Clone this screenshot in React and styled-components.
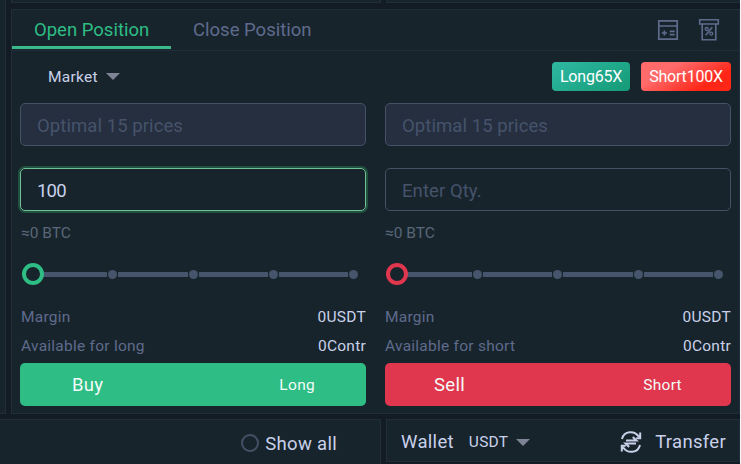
import React, { useState } from "react";
import styled, { createGlobalStyle, ThemeProvider } from "styled-components";

const theme = {
  page: "#131b24",
  panel: "#18242c",
  line: "#202d3a",
  text: "#c9d1ea",
  muted: "#5f6b8d",
  hint: "#46536b",
  field: "#445166",
  track: "#46556b",
  green: "#2ebd85",
  red: "#e0364e"
};

const GlobalStyle = createGlobalStyle`
  * {
    box-sizing: border-box;
  }
  body {
    margin: 0;
    background: #f4f5f7;
    overflow: hidden;
    font-family: Roboto, "Liberation Sans", sans-serif;
  }
`;

const Screen = styled.div`
  display: grid;
  grid-template-rows: 3px 406px 45px;
  row-gap: 5px;
  width: 740px;
  height: 464px;
  overflow: hidden;
  color: ${props => props.theme.text};
  background: ${props => props.theme.page};
`;

const Middle = styled.div`
  display: grid;
  grid-template-columns: 6px 729px;
  column-gap: 5px;
  margin-top: 1px;
`;

const Panel = styled.section`
  background: ${props => props.theme.panel};
  border: 1px solid ${props => props.theme.line};
`;

const Rail = styled(Panel)`
  margin-top: -9px;
  border-width: 0 1px 1px 0;
`;

const TopRow = styled.div`
  display: grid;
  grid-template-columns: 370px 1fr;
  column-gap: 5px;
  padding-left: 11px;
`;

const TopPanel = styled(Panel)`
  border-top: 0;
`;

const Header = styled.header`
  display: flex;
  justify-content: space-between;
  height: 41px;
  border-bottom: 1px solid ${props => props.theme.line};
`;

const Tabs = styled.nav`
  display: flex;
`;

const Tab = styled.button`
  display: flex;
  align-items: center;
  width: 159px;
  height: 39px;
  padding: 4px 0 0 22px;
  border: 0;
  border-bottom: 3px solid
    ${props => (props.$active ? "#3cb98a" : "transparent")};
  background: none;
  color: ${props => (props.$active ? props.theme.green : props.theme.muted)};
  font: 18.5px Roboto, sans-serif;
  white-space: nowrap;
`;

const Tools = styled.div`
  display: flex;
  gap: 19px;
  padding: 8px 19px 0 0;
  color: ${props => props.theme.muted};
`;

const Options = styled.div`
  display: flex;
  align-items: center;
  gap: 11px;
  height: 51px;
  margin-bottom: 1px;
  padding: 0 8px 0 36px;
`;

const Select = styled.div`
  display: flex;
  align-items: center;
  gap: 8px;
  margin-right: auto;
  font-size: 15.5px;
  letter-spacing: 0.25px;
`;

const Caret = styled.i`
  border: 7px solid transparent;
  border-top-color: #7e8496;
  border-bottom-width: 0;
`;

const Leverage = styled.span`
  display: flex;
  align-items: center;
  justify-content: center;
  width: ${props => (props.$short ? 90 : 78)}px;
  height: 29px;
  border-radius: 4px;
  color: #fff;
  font-size: 16px;
  letter-spacing: -0.2px;
  background: ${props =>
    props.$short
      ? "linear-gradient(150deg, #ff6a6a 30%, #ff2617 75%)"
      : "linear-gradient(150deg, #2fb9a3, #149a76)"};
`;

const Sides = styled.div`
  display: grid;
  grid-template-columns: 346px 346px;
  column-gap: 19px;
  padding-left: 8px;
`;

const Field = styled.input`
  display: block;
  width: 100%;
  height: 43px;
  margin-bottom: ${props => (props.disabled ? 22 : 0)}px;
  padding: 2px 16px 0;
  border: 1px solid
    ${props => (props.$focused ? "#73bf98" : props.theme.field)};
  border-radius: 5px;
  outline: 0;
  color: ${props => props.theme.text};
  background: ${props => (props.disabled ? "#252f40" : "transparent")};
  box-shadow: ${props => (props.$focused ? "0 0 0 2px #20523f" : "none")};
  font: 18.5px Roboto, sans-serif;
  letter-spacing: -0.8px;
  &::placeholder {
    color: ${props => props.theme.hint};
    letter-spacing: 0.08px;
    opacity: 1;
  }
`;

const Estimate = styled.div`
  height: 43px;
  line-height: 44px;
  padding-left: ${props => props.$inset}px;
  color: #596778;
  font-size: 15.5px;
`;

const Slider = styled.div`
  display: flex;
  align-items: center;
  height: 40px;
  padding: 0 7px 0 ${props => props.$inset + 1}px;
`;

const Thumb = styled.span`
  flex: none;
  position: relative;
  width: 22px;
  height: 22px;
  margin-right: -6px;
  border: 4px solid ${props => props.theme[props.$tone]};
  border-radius: 50%;
  background: ${props => props.theme.panel};
`;

const Track = styled.span`
  flex: 1;
  height: 5px;
  background: ${props => props.theme.track};
`;

const Stop = styled.span`
  flex: none;
  width: 9px;
  height: 9px;
  margin: 0 1px;
  border-radius: 50%;
  background: ${props => props.theme.track};
`;

const Info = styled.dl`
  margin: 8px 0 3px;
`;

const InfoRow = styled.div`
  display: flex;
  justify-content: space-between;
  height: 29px;
  line-height: 31px;
  padding-left: ${props => props.$inset}px;
  font-size: 15.5px;
  letter-spacing: 0.25px;
`;

const InfoLabel = styled.dt`
  color: ${props => props.theme.muted};
`;

const InfoValue = styled.dd`
  margin: 0;
`;

const Submit = styled.button`
  display: flex;
  align-items: center;
  justify-content: space-between;
  width: 100%;
  height: 43px;
  padding: 0 ${props => (props.$tone === "red" ? "49px" : "51px 0 52px")};
  border: 0;
  border-radius: 5px;
  color: #f2fbf7;
  background: ${props => props.theme[props.$tone]};
  font: 18.5px Roboto, sans-serif;
  letter-spacing: 0.3px;
`;

const Small = styled.small`
  padding-top: 1px;
  font-size: 15.5px;
`;

const Footer = styled.footer`
  display: grid;
  grid-template-columns: 381px 354px;
  column-gap: 5px;
`;

const FooterPanel = styled(Panel)`
  display: flex;
  align-items: center;
  font-size: 18.5px;
`;

const Orders = styled(FooterPanel)`
  justify-content: flex-end;
  gap: 6px;
  padding: 4px 43px 0 0;
  border-width: 1px 1px 0 0;
  letter-spacing: 0.3px;
`;

const Radio = styled.span`
  width: 18px;
  height: 18px;
  margin-top: -3px;
  border: 2px solid #465065;
  border-radius: 50%;
`;

const WalletPanel = styled(FooterPanel)`
  height: 43px;
  padding: 3px 13px 0 14px;
`;

const WalletTitle = styled.span`
  margin-right: 15px;
  letter-spacing: 0.3px;
`;

const TransferLabel = styled.span`
  margin-left: 13px;
  letter-spacing: 0.3px;
`;

const CalculatorIcon = () => (
  <svg width="22" height="24" viewBox="0 0 22 24" fill="none" stroke="currentColor" strokeWidth="1.7">
    <path d="M1.8 2.8h18.4v18.4H1.8zM2 8h18" />
    <path d="M4.8 15h5.2M7.4 12.4v5.2M12.7 13.4h5M12.7 16.6h5" />
  </svg>
);

const FeeIcon = () => (
  <svg width="22" height="24" viewBox="0 0 22 24" fill="none" stroke="currentColor" strokeWidth="1.6">
    <path d="M4 6H1.7V1.8h18.6V6H18M4 6h14" />
    <path d="M4.2 6v15.8h13.6V6" />
    <path d="M14.2 9.3l-6.5 8" />
    <circle cx="8.7" cy="11" r="1.5" strokeWidth="1.3" />
    <circle cx="13.3" cy="15.6" r="1.5" strokeWidth="1.3" />
  </svg>
);

const TransferIcon = () => (
  <svg width="22" height="22" viewBox="0 0 22 22" fill="none" stroke="currentColor" strokeWidth="2">
    <path d="M2 8C4-.4 14.4-1 19 5.8M20.2 1.4v5.8h-4" />
    <path d="M20 14C18 22.4 7.6 23 3 16.2M1.8 20.6v-5.8h4" />
    <path d="M6 9.5h10.4L12.8 6M16 12.6H5.6L9.2 16" />
  </svg>
);

const sides = [
  { name: "long", tone: "green", action: "Buy", label: "Long", inset: 1 },
  { name: "short", tone: "red", action: "Sell", label: "Short", inset: 0 }
];

function OrderSide({ side, initial }) {
  const [amount, setAmount] = useState(initial);
  return (
    <div>
      <Field disabled placeholder="Optimal 15 prices" />
      <Field
        $focused={initial !== ""}
        placeholder="Enter Qty."
        value={amount}
        onChange={e => setAmount(e.target.value)}
      />
      <Estimate $inset={side.inset}>≈0 BTC</Estimate>
      <Slider $inset={side.inset}>
        <Thumb $tone={side.tone} />
        {[25, 50, 75, 100].map(step => (
          <React.Fragment key={step}>
            <Track />
            <Stop />
          </React.Fragment>
        ))}
      </Slider>
      <Info>
        <InfoRow $inset={side.inset}>
          <InfoLabel>Margin</InfoLabel>
          <InfoValue>0USDT</InfoValue>
        </InfoRow>
        <InfoRow $inset={side.inset}>
          <InfoLabel>Available for {side.name}</InfoLabel>
          <InfoValue>0Contr</InfoValue>
        </InfoRow>
      </Info>
      <Submit $tone={side.tone}>
        {side.action}
        <Small>{side.label}</Small>
      </Submit>
    </div>
  );
}

export default function App() {
  const [tab, setTab] = useState("Open Position");

  return (
    <ThemeProvider theme={theme}>
      <GlobalStyle />
      <Screen>
        <TopRow>
          <TopPanel />
          <TopPanel />
        </TopRow>
        <Middle>
          <Rail />
          <Panel>
            <Header>
              <Tabs>
                {["Open Position", "Close Position"].map(name => (
                  <Tab key={name} $active={tab === name} onClick={() => setTab(name)}>
                    {name}
                  </Tab>
                ))}
              </Tabs>
              <Tools>
                <CalculatorIcon />
                <FeeIcon />
              </Tools>
            </Header>
            <Options>
              <Select>
                Market
                <Caret />
              </Select>
              <Leverage>Long65X</Leverage>
              <Leverage $short>Short100X</Leverage>
            </Options>
            <Sides>
              <OrderSide side={sides[0]} initial="100" />
              <OrderSide side={sides[1]} initial="" />
            </Sides>
          </Panel>
        </Middle>
        <Footer>
          <Orders>
            <Radio />
            Show all
          </Orders>
          <WalletPanel>
            <WalletTitle>Wallet</WalletTitle>
            <Select>
              USDT
              <Caret />
            </Select>
            <TransferIcon />
            <TransferLabel>Transfer</TransferLabel>
          </WalletPanel>
        </Footer>
      </Screen>
    </ThemeProvider>
  );
}
